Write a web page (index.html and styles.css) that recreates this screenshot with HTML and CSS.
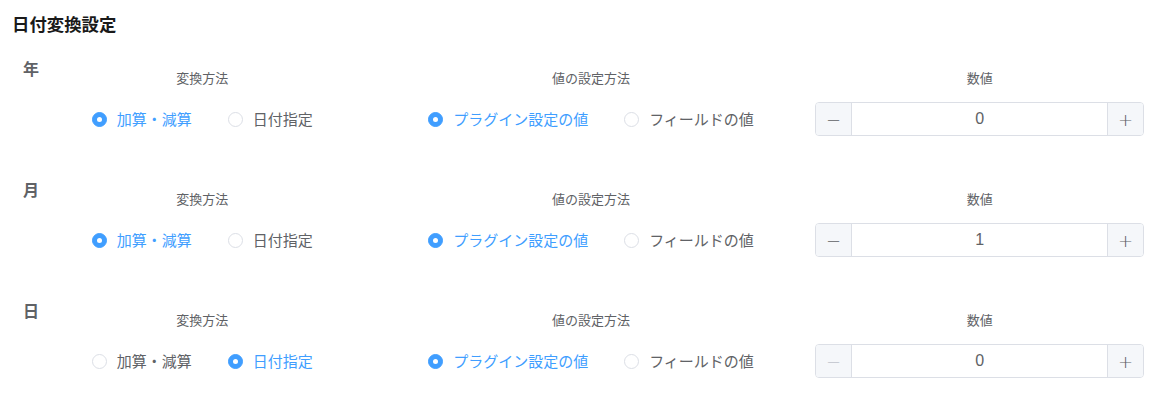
FILE: index.html
```html
<!DOCTYPE html>
<html lang="ja">
<head>
<meta charset="utf-8">
<title>日付変換設定</title>
<link rel="stylesheet" href="styles.css">
</head>
<body>
<div class="page">
  <h1 class="title">日付変換設定</h1>

  <section class="unit">
    <div class="unit-label">年</div>
    <div class="col">
      <div class="col-head">変換方法</div>
      <div class="radios">
        <label class="radio checked"><span class="dot"></span><span class="txt">加算・減算</span></label>
        <label class="radio"><span class="dot"></span><span class="txt">日付指定</span></label>
      </div>
    </div>
    <div class="col">
      <div class="col-head">値の設定方法</div>
      <div class="radios">
        <label class="radio checked"><span class="dot"></span><span class="txt">プラグイン設定の値</span></label>
        <label class="radio"><span class="dot"></span><span class="txt">フィールドの値</span></label>
      </div>
    </div>
    <div class="col">
      <div class="col-head">数値</div>
      <div class="num">
        <span class="num-btn">&minus;</span>
        <span class="num-val">0</span>
        <span class="num-btn">+</span>
      </div>
    </div>
  </section>

  <section class="unit">
    <div class="unit-label">月</div>
    <div class="col">
      <div class="col-head">変換方法</div>
      <div class="radios">
        <label class="radio checked"><span class="dot"></span><span class="txt">加算・減算</span></label>
        <label class="radio"><span class="dot"></span><span class="txt">日付指定</span></label>
      </div>
    </div>
    <div class="col">
      <div class="col-head">値の設定方法</div>
      <div class="radios">
        <label class="radio checked"><span class="dot"></span><span class="txt">プラグイン設定の値</span></label>
        <label class="radio"><span class="dot"></span><span class="txt">フィールドの値</span></label>
      </div>
    </div>
    <div class="col">
      <div class="col-head">数値</div>
      <div class="num">
        <span class="num-btn">&minus;</span>
        <span class="num-val">1</span>
        <span class="num-btn">+</span>
      </div>
    </div>
  </section>

  <section class="unit">
    <div class="unit-label">日</div>
    <div class="col">
      <div class="col-head">変換方法</div>
      <div class="radios">
        <label class="radio"><span class="dot"></span><span class="txt">加算・減算</span></label>
        <label class="radio checked"><span class="dot"></span><span class="txt">日付指定</span></label>
      </div>
    </div>
    <div class="col">
      <div class="col-head">値の設定方法</div>
      <div class="radios">
        <label class="radio checked"><span class="dot"></span><span class="txt">プラグイン設定の値</span></label>
        <label class="radio"><span class="dot"></span><span class="txt">フィールドの値</span></label>
      </div>
    </div>
    <div class="col">
      <div class="col-head">数値</div>
      <div class="num">
        <span class="num-btn disabled">&minus;</span>
        <span class="num-val">0</span>
        <span class="num-btn">+</span>
      </div>
    </div>
  </section>
</div>
</body>
</html>
```

FILE: styles.css
```css
html, body {
  margin: 0;
  padding: 0;
  background: #ffffff;
}

body {
  font-family: "Noto Sans CJK JP", "Noto Sans", sans-serif;
  color: #606266;
  overflow: hidden;
}

.page {
  padding: 12px 0 0 8px;
}

.title {
  margin: 0 0 22px 4px;
  font-size: 17.4px;
  line-height: 24px;
  font-weight: 700;
  color: #1a1a1a;
}

.unit {
  display: grid;
  grid-template-columns: repeat(3, 1fr);
  margin: 0 -3px 43px 0;
}

.unit:last-child {
  margin-bottom: 0;
}

.unit-label {
  grid-area: 1 / 1;
  justify-self: start;
  align-self: start;
  margin-left: 15px;
  font-size: 16px;
  line-height: 20px;
  font-weight: 700;
  color: #606266;
}

.col {
  grid-row: 1;
  display: flex;
  flex-direction: column;
  align-items: center;
  padding-top: 11px;
}

.col:nth-child(2) { grid-column: 1; }
.col:nth-child(3) { grid-column: 2; }
.col:nth-child(4) { grid-column: 3; }

.col-head {
  font-size: 13px;
  line-height: 18px;
  color: #606266;
  margin-bottom: 15px;
}

.radios {
  display: flex;
  align-items: center;
  gap: 36px;
  height: 34px;
}

.radio {
  display: flex;
  align-items: center;
  gap: 10px;
  font-size: 15px;
  line-height: 20px;
  color: #606266;
  cursor: pointer;
}

.dot {
  box-sizing: border-box;
  width: 15px;
  height: 15px;
  border-radius: 50%;
  border: 1px solid #dcdfe6;
  background: #ffffff;
  display: flex;
  align-items: center;
  justify-content: center;
}

.radio.checked .txt {
  color: #409eff;
}

.radio.checked .dot {
  border-color: #409eff;
  background: #409eff;
}

.radio.checked .dot::after {
  content: "";
  width: 5px;
  height: 5px;
  border-radius: 50%;
  background: #ffffff;
}

.num {
  box-sizing: border-box;
  display: flex;
  width: 329px;
  height: 34px;
  border: 1px solid #dcdfe6;
  border-radius: 4px;
  overflow: hidden;
  background: #ffffff;
}

.num-btn {
  width: 35px;
  flex: none;
  background: #f5f7fa;
  color: #606266;
  display: flex;
  align-items: center;
  justify-content: center;
  font-size: 18px;
  font-family: "DejaVu Sans", sans-serif;
  font-weight: 300;
}

.num-btn:first-child {
  border-right: 1px solid #dcdfe6;
}

.num-btn:last-child {
  border-left: 1px solid #dcdfe6;
}

.num-btn.disabled {
  color: #c0c4cc;
}

.num-val {
  flex: 1;
  display: flex;
  align-items: center;
  justify-content: center;
  font-family: "Liberation Sans", "Noto Sans CJK JP", sans-serif;
  font-size: 16px;
  color: #606266;
}
```
